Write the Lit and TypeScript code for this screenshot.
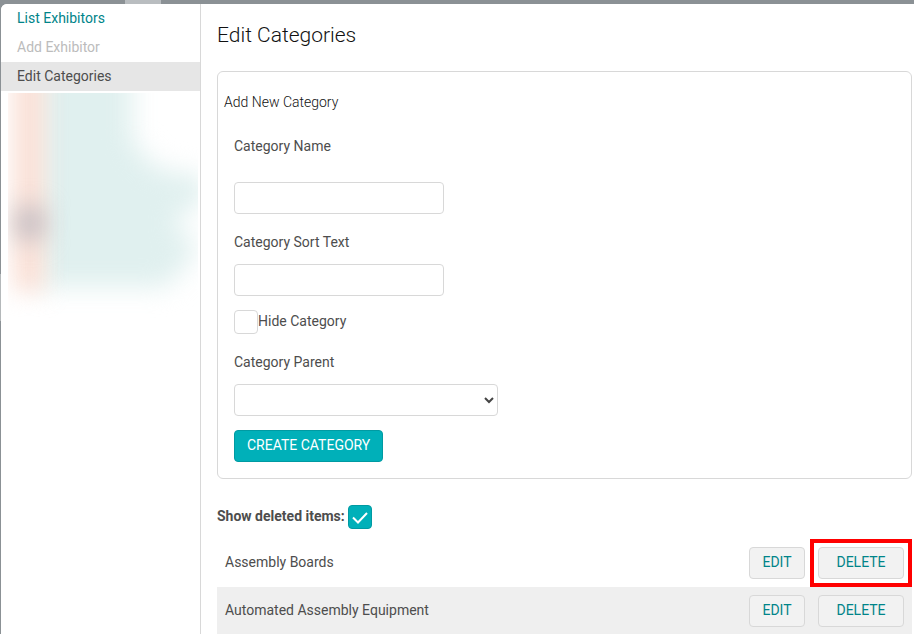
import { LitElement, html, css } from "lit";
import { customElement } from "lit/decorators.js";
import { classMap } from "lit/directives/class-map.js";

interface Category {
  name: string;
  highlighted?: boolean;
}

const box = css`
  * {
    box-sizing: border-box;
  }
`;

@customElement("side-nav")
export class SideNav extends LitElement {
  static styles = [
    box,
    css`
      :host {
        display: block;
        flex: 0 0 200px;
        border-right: 1px solid #d8d8d8;
        background: #fff;
      }
      .item {
        display: block;
        padding: 0 16px;
        line-height: 29px;
        color: #008489;
        text-decoration: none;
      }
      .disabled {
        color: #bcbcbc;
      }
      .current {
        background: #e6e6e6;
        color: #4d4d4d;
      }
      .redacted {
        display: block;
        width: 190px;
        height: 225px;
        margin: 2px 0 0 7px;
        overflow: hidden;
      }
    `,
  ];

  render() {
    return html`
      <nav>
        <a class="item" href="#list">List Exhibitors</a>
        <a class="item disabled" aria-disabled="true">Add Exhibitor</a>
        <a class="item current" href="#categories" aria-current="page">Edit Categories</a>
      </nav>
      <svg class="redacted" viewBox="0 0 190 225" aria-hidden="true">
        <defs>
          <filter
            id="soft"
            x="-50%"
            y="-50%"
            width="200%"
            height="200%"
            color-interpolation-filters="sRGB"
          >
            <feGaussianBlur stdDeviation="13" />
          </filter>
          <filter
            id="narrow"
            x="-200%"
            y="-200%"
            width="500%"
            height="500%"
            color-interpolation-filters="sRGB"
          >
            <feGaussianBlur stdDeviation="12" />
          </filter>
        </defs>
        <path
          filter="url(#soft)"
          fill="#e0f0ef"
          d="M30-30H124V46L146 74L198 86V108L172 120L168 136L190 150L180 170L158 194H30Z"
        />
        <rect filter="url(#narrow)" x="7" y="-30" width="28" height="228" fill="#fadcd1" />
        <rect filter="url(#narrow)" x="8" y="114" width="28" height="32" fill="#c1bcc2" />
      </svg>
    `;
  }
}

@customElement("check-field")
export class CheckField extends LitElement {
  static properties = {
    label: { type: String },
    checked: { type: Boolean },
    leading: { type: Boolean },
  };
  declare label: string;
  declare checked: boolean;
  declare leading: boolean;

  static styles = [
    box,
    css`
      :host {
        display: block;
      }
      .row {
        display: flex;
        height: 24px;
        line-height: 22px;
      }
      .leading {
        gap: 3px;
        font-weight: 700;
      }
      .box {
        display: grid;
        order: 0;
      }
      .leading .box {
        order: 1;
      }
      input,
      svg {
        grid-area: 1 / 1;
        width: 24px;
        height: 24px;
        margin: 0;
      }
      input {
        appearance: none;
        border: 1px solid #d8d8d8;
        border-radius: 4px;
        background: #fff;
      }
      input:checked {
        border-color: #009aa2;
        background: #00b0b9;
      }
      svg {
        visibility: hidden;
        pointer-events: none;
      }
      input:checked + svg {
        visibility: visible;
      }
    `,
  ];

  render() {
    return html`
      <label class=${classMap({ row: true, leading: this.leading })}>
        <span class="box">
          <input type="checkbox" .checked=${this.checked ?? false} />
          <svg viewBox="0 0 24 24" fill="none" stroke="#fff" stroke-width="2">
            <path d="M5 12.500L10 17.500L19 8" />
          </svg>
        </span>
        <span>${this.label}</span>
      </label>
    `;
  }
}

@customElement("category-form")
export class CategoryForm extends LitElement {
  static styles = [
    box,
    css`
      :host {
        display: block;
      }
      form {
        border: 1px solid #d8d8d8;
        border-radius: 6px;
        padding: 20px 16px 16px;
        line-height: 20px;
      }
      h2 {
        margin: 0 0 24px -10px;
        font-size: 14px;
        font-weight: 300;
        color: #111;
      }
      .field {
        display: flex;
        flex-direction: column;
        align-items: flex-start;
        gap: 12px;
        margin-bottom: 14px;
      }
      .spaced {
        gap: 26px;
        margin-bottom: 18px;
      }
      check-field {
        margin-bottom: 18px;
      }
      input,
      select {
        width: 210px;
        height: 32px;
        border: 1px solid #d8d8d8;
        border-radius: 4px;
        background: #fff;
        padding: 0 8px;
        font: inherit;
        color: inherit;
      }
      .select {
        display: grid;
        width: 264px;
      }
      select {
        grid-area: 1 / 1;
        width: 100%;
        appearance: none;
      }
      .select svg {
        grid-area: 1 / 1;
        place-self: center end;
        width: 10px;
        height: 8px;
        margin-right: 4px;
        pointer-events: none;
      }
      button {
        height: 32px;
        padding: 0 12px 2px;
        border: 1px solid #009aa2;
        border-radius: 4px;
        background: #00b0b9;
        color: #fff;
        font: inherit;
        text-transform: uppercase;
      }
    `,
  ];

  render() {
    return html`
      <form @submit=${(e: Event) => e.preventDefault()}>
        <h2>Add New Category</h2>
        <div class="field spaced">
          <label for="name">Category Name</label>
          <input id="name" type="text" />
        </div>
        <div class="field">
          <label for="sort">Category Sort Text</label>
          <input id="sort" type="text" />
        </div>
        <check-field label="Hide Category"></check-field>
        <div class="field">
          <label for="parent">Category Parent</label>
          <span class="select">
            <select id="parent">
              <option></option>
            </select>
            <svg viewBox="0 0 10 8" fill="none" stroke="#444" stroke-width="2">
              <path d="M1 2L5 6L9 2" />
            </svg>
          </span>
        </div>
        <button type="submit">Create Category</button>
      </form>
    `;
  }
}

@customElement("category-table")
export class CategoryTable extends LitElement {
  static properties = { items: { attribute: false } };
  declare items: Category[];

  static styles = [
    box,
    css`
      :host {
        display: block;
      }
      table {
        width: 100%;
        border-collapse: collapse;
      }
      tr:nth-child(even) {
        background: #efefef;
      }
      td {
        height: 48px;
        padding: 0 8px;
        line-height: 20px;
      }
      .name {
        padding-bottom: 2px;
      }
      .action {
        width: 1px;
        padding: 0 5px 0 0;
      }
      .action:last-child {
        width: 102px;
        padding: 0;
      }
      .frame {
        display: flex;
        height: 48px;
        align-items: center;
        padding: 0 4px;
        border: 4px solid transparent;
      }
      .marked {
        border-color: #f00;
      }
      button {
        display: block;
        width: 56px;
        height: 32px;
        padding: 0 0 2px;
        border: 1px solid #d8d8d8;
        border-radius: 4px;
        background: #f2f2f2;
        color: #008489;
        font: inherit;
        text-transform: uppercase;
      }
      .frame button {
        width: 86px;
      }
    `,
  ];

  render() {
    return html`
      <table>
        <tbody>
          ${(this.items ?? []).map(
            (c) => html`
              <tr>
                <td class="name">${c.name}</td>
                <td class="action"><button type="button">Edit</button></td>
                <td class="action">
                  <div class=${classMap({ frame: true, marked: !!c.highlighted })}>
                    <button type="button">Delete</button>
                  </div>
                </td>
              </tr>
            `
          )}
        </tbody>
      </table>
    `;
  }
}

@customElement("app-root")
export class AppRoot extends LitElement {
  private categories: Category[] = [
    { name: "Assembly Boards", highlighted: true },
    { name: "Automated Assembly Equipment" },
  ];

  static styles = [
    box,
    css`
      :host {
        display: block;
        height: 100vh;
        padding: 4px 0 0 1px;
        box-sizing: border-box;
        overflow: hidden;
        font-family: Roboto, "Liberation Sans", sans-serif;
        font-size: 14px;
        color: #4d4d4d;
        background:
          linear-gradient(#b9bdc0, #b9bdc0) 125px 0 / 36px 4px no-repeat,
          linear-gradient(#b4b8ba, #b4b8ba) 0 274px / 1px 47px no-repeat,
          #8b9195;
      }
      .panel {
        display: flex;
        height: 100%;
        overflow: hidden;
        border-radius: 6px 0 0 0;
        background: #fff;
      }
      main {
        flex: 1;
        min-width: 0;
        padding: 16px 2px 0 16px;
        overflow-y: auto;
        scrollbar-width: none;
      }
      h1 {
        margin: 0 0 21px;
        font-size: 21px;
        font-weight: 300;
        line-height: 30px;
        color: #111;
      }
      .toggle {
        margin: 26px 0 10px;
      }
    `,
  ];

  render() {
    return html`
      <div class="panel">
        <side-nav></side-nav>
        <main>
          <h1>Edit Categories</h1>
          <category-form></category-form>
          <check-field class="toggle" label="Show deleted items:" leading checked></check-field>
          <category-table .items=${this.categories}></category-table>
        </main>
      </div>
    `;
  }
}
